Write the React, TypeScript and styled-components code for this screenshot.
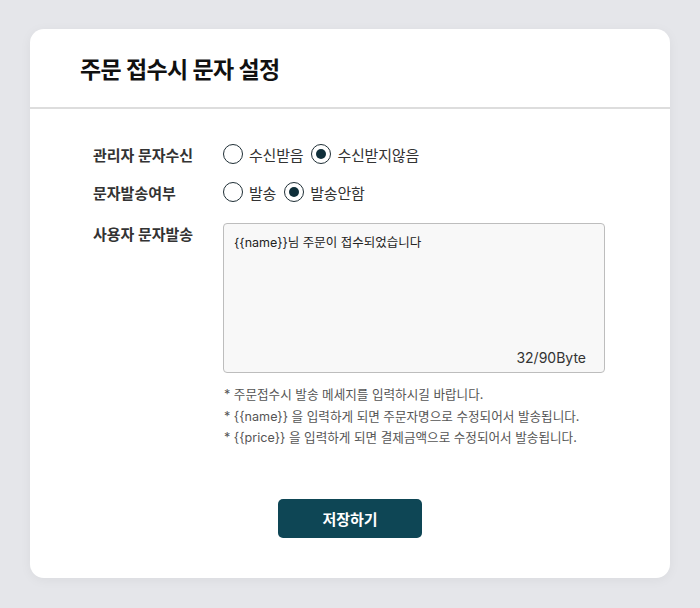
import { FC, useState } from "react";
import styled, { createGlobalStyle } from "styled-components";

const GlobalStyle = createGlobalStyle`
  html, body {
    margin: 0;
    padding: 0;
    background: #e5e6ea;
  }
  body {
    font-family: Inter, "Noto Sans CJK KR", sans-serif;
    color: #222;
  }
`;

const RadioOption: FC<{ label: string; checked: boolean; onSelect: () => void }> = ({ label, checked, onSelect }) => (
  <RadioLabel onClick={onSelect}>
    <RadioCircle $checked={checked} />
    {label}
  </RadioLabel>
);

const App: FC = () => {
  const [adminReceive, setAdminReceive] = useState<boolean>(false);
  const [sendSms, setSendSms] = useState<boolean>(false);
  const [message, setMessage] = useState<string>("{{name}}님 주문이 접수되었습니다");

  return (
    <>
      <GlobalStyle />
      <Page>
        <Card>
          <Header>
            <Title>주문 접수시 문자 설정</Title>
          </Header>
          <Body>
            <Row>
              <Label>관리자 문자수신</Label>
              <RadioGroup>
                <RadioOption label="수신받음" checked={adminReceive} onSelect={() => setAdminReceive(true)} />
                <RadioOption label="수신받지않음" checked={!adminReceive} onSelect={() => setAdminReceive(false)} />
              </RadioGroup>
            </Row>
            <Row>
              <Label>문자발송여부</Label>
              <RadioGroup>
                <RadioOption label="발송" checked={sendSms} onSelect={() => setSendSms(true)} />
                <RadioOption label="발송안함" checked={!sendSms} onSelect={() => setSendSms(false)} />
              </RadioGroup>
            </Row>
            <TextRow>
              <Label>사용자 문자발송</Label>
              <Field>
                <TextBox>
                  <TextArea value={message} onChange={(e) => setMessage(e.target.value)} />
                  <Counter>32/90Byte</Counter>
                </TextBox>
                <Notes>
                  <li>* 주문접수시 발송 메세지를 입력하시길 바랍니다.</li>
                  <li>* {"{{name}}"} 을 입력하게 되면 주문자명으로 수정되어서 발송됩니다.</li>
                  <li>* {"{{price}}"} 을 입력하게 되면 결제금액으로 수정되어서 발송됩니다.</li>
                </Notes>
              </Field>
            </TextRow>
            <Footer>
              <SaveButton>저장하기</SaveButton>
            </Footer>
          </Body>
        </Card>
      </Page>
    </>
  );
};

const Page = styled.div`
  box-sizing: border-box;
  width: 700px;
  height: 608px;
  padding: 29px 30px 30px;
`;

const Card = styled.div`
  background: #fff;
  border-radius: 14px;
  box-shadow: 0 2px 12px rgba(0, 0, 0, 0.05);
  height: 549px;
  display: flex;
  flex-direction: column;
`;

const Header = styled.div`
  height: 80px;
  box-sizing: border-box;
  padding: 0 50px;
  display: flex;
  align-items: center;
  border-bottom: 2px solid #dddddd;
`;

const Title = styled.h1`
  margin: 0;
  font-size: 23px;
  font-weight: 700;
  color: #111;
  letter-spacing: -0.6px;
`;

const Body = styled.div`
  padding: 33px 63px 0;
  display: flex;
  flex-direction: column;
`;

const Row = styled.div`
  display: flex;
  align-items: center;
  height: 24px;
  margin-bottom: 14px;
`;

const TextRow = styled.div`
  display: flex;
  align-items: flex-start;
  margin-top: 5px;
`;

const Label = styled.div`
  width: 130px;
  flex-shrink: 0;
  font-size: 15px;
  font-weight: 700;
  color: #333;
`;

const RadioGroup = styled.div`
  display: flex;
  gap: 8px;
`;

const RadioLabel = styled.label`
  display: flex;
  align-items: center;
  gap: 6px;
  font-size: 15px;
  letter-spacing: -0.2px;
  color: #333;
  cursor: pointer;
`;

const RadioCircle = styled.span<{ $checked: boolean }>`
  box-sizing: border-box;
  width: 20px;
  height: 20px;
  border-radius: 50%;
  border: 1.5px solid #1f2f36;
  background: #fff;
  display: flex;
  align-items: center;
  justify-content: center;

  &::after {
    content: "";
    width: 10px;
    height: 10px;
    border-radius: 50%;
    background: #0f2f3a;
    display: ${(p) => (p.$checked ? "block" : "none")};
  }
`;

const Field = styled.div`
  display: flex;
  flex-direction: column;
`;

const TextBox = styled.div`
  position: relative;
  box-sizing: border-box;
  width: 382px;
  height: 150px;
  border: 1px solid #bdbdbd;
  border-radius: 4px;
  background: #f8f8f8;
`;

const TextArea = styled.textarea`
  box-sizing: border-box;
  width: 100%;
  height: 120px;
  border: none;
  outline: none;
  resize: none;
  background: transparent;
  padding: 8px 10px;
  font-family: inherit;
  font-size: 12.5px;
  color: #222;
`;

const Counter = styled.span`
  position: absolute;
  right: 18px;
  bottom: 6px;
  font-size: 14px;
  color: #333;
`;

const Notes = styled.ul`
  list-style: none;
  margin: 11px 0 0;
  padding: 0 0 0 1px;
  font-size: 12.6px;
  color: #555;
  line-height: 21.5px;
`;

const Footer = styled.div`
  display: flex;
  justify-content: center;
  margin-top: 50px;
`;

const SaveButton = styled.button`
  width: 144px;
  height: 39px;
  border: none;
  border-radius: 5px;
  background: #0e4655;
  color: #fff;
  font-family: inherit;
  font-size: 15px;
  font-weight: 700;
  cursor: pointer;
`;

export default App;
